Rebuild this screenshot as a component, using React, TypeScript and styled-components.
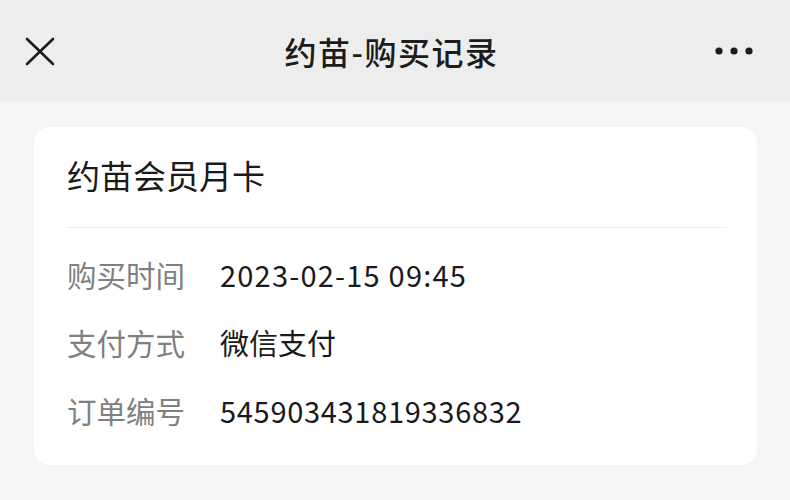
import React from "react";
import styled, { createGlobalStyle } from "styled-components";

const GlobalStyle = createGlobalStyle`
  html, body {
    margin: 0;
    padding: 0;
    background: #f5f5f5;
    font-family: "Noto Sans CJK SC", "Noto Sans", sans-serif;
  }
`;

const Page = styled.div`
  width: 790px;
  height: 500px;
  background: #f5f5f5;
  overflow: hidden;
`;

const TopBar = styled.header`
  height: 101px;
  background: #ededed;
  display: grid;
  grid-template-columns: 120px 1fr 120px;
  align-items: center;
  padding: 0 37px 0 24px;
  box-sizing: border-box;
`;

const IconButton = styled.button<{ $align?: "left" | "right" }>`
  border: none;
  background: none;
  padding: 0;
  display: flex;
  justify-content: ${(p) => (p.$align === "right" ? "flex-end" : "flex-start")};
  align-items: center;
  cursor: pointer;
  color: #1c1c1c;
`;

const Title = styled.h1`
  margin: 0;
  text-align: center;
  font-size: 32px;
  font-weight: 500;
  color: #1c1c1c;
  letter-spacing: 1.5px;
  padding-left: 6px;
`;

const Body = styled.main`
  padding: 26px 33px 0 34px;
`;

const Card = styled.section`
  background: #ffffff;
  border-radius: 16px;
  padding: 0 30px 21px 33px;
`;

const CardTitle = styled.div`
  height: 101px;
  box-sizing: border-box;
  padding-bottom: 5px;
  display: flex;
  align-items: center;
  font-size: 33px;
  color: #1a1a1a;
  border-bottom: 1px solid #ededed;
`;

const InfoList = styled.dl`
  margin: 0;
  padding-top: 12px;
`;

const InfoRow = styled.div`
  display: flex;
  align-items: center;
  height: 68px;
`;

const Label = styled.dt`
  width: 153px;
  font-size: 29.5px;
  color: #808080;
`;

const Value = styled.dd<{ $spacing: number }>`
  margin: 0;
  font-size: 29px;
  color: #1a1a1a;
  letter-spacing: ${(p) => p.$spacing}px;
`;

const rows = [
  { label: "购买时间", value: "2023-02-15 09:45", spacing: 1.2 },
  { label: "支付方式", value: "微信支付", spacing: 0 },
  { label: "订单编号", value: "545903431819336832", spacing: 0.7 },
];

export default function App() {
  return (
    <Page>
      <GlobalStyle />
      <TopBar>
        <IconButton aria-label="关闭">
          <svg width="32" height="32" viewBox="0 0 32 32">
            <path d="M3 4 L29 29 M29 4 L3 29" stroke="currentColor" strokeWidth="2.6" strokeLinecap="round" />
          </svg>
        </IconButton>
        <Title>约苗-购买记录</Title>
        <IconButton $align="right" aria-label="更多">
          <svg width="38" height="10" viewBox="0 0 38 10">
            <circle cx="4" cy="5" r="3.6" fill="currentColor" />
            <circle cx="19" cy="5" r="3.6" fill="currentColor" />
            <circle cx="34" cy="5" r="3.6" fill="currentColor" />
          </svg>
        </IconButton>
      </TopBar>
      <Body>
        <Card>
          <CardTitle>约苗会员月卡</CardTitle>
          <InfoList>
            {rows.map((r) => (
              <InfoRow key={r.label}>
                <Label>{r.label}</Label>
                <Value $spacing={r.spacing}>{r.value}</Value>
              </InfoRow>
            ))}
          </InfoList>
        </Card>
      </Body>
    </Page>
  );
}
